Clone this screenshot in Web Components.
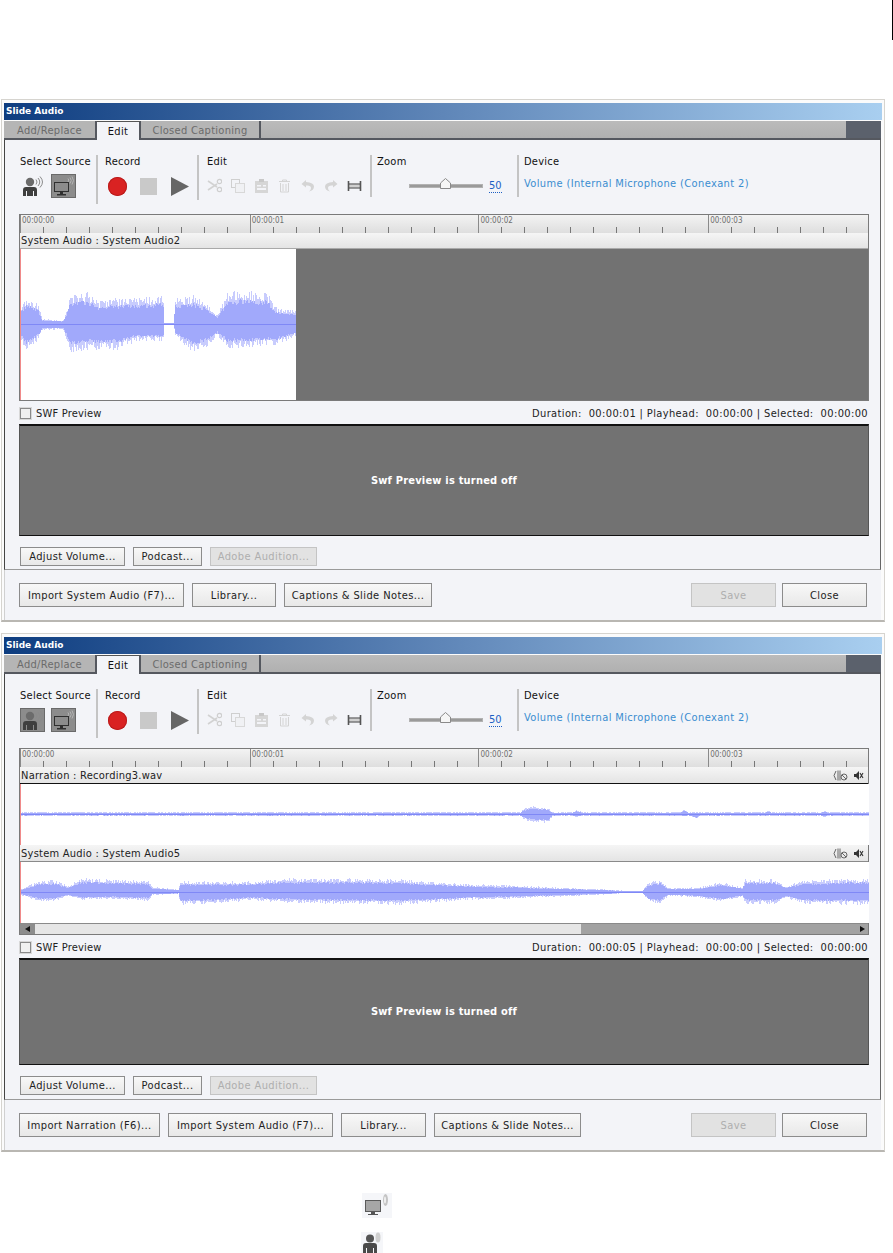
<!DOCTYPE html>
<html>
<head>
<meta charset="utf-8">
<title>Slide Audio</title>
<style>
  html, body { margin: 0; padding: 0; background: #fff; }
  body {
    width: 893px; height: 1253px; overflow: hidden; position: relative;
    font-family: "DejaVu Sans Condensed", "DejaVu Sans", sans-serif; font-size: 11px; color: #111;
  }
  .page { padding-top: 99px; }
</style>
</head>
<body>
<page-mark></page-mark>
<div class="page">

  <audio-dialog source="monitor" panel="430" preview="112">
    <time-ruler slot="tracks"></time-ruler>
    <audio-track slot="tracks" label="System Audio : System Audio2" line="#a9a9a9" h="16"></audio-track>
    <wave-form slot="tracks" height="151" width="276" seed="7" center="75"
      data="0,17,16 6,27,27 18,20,16 22,5,6 43,4,6 47,16,18 50,31,29 67,32,26 77,24,26 97,26,26 117,27,17 143,29,18 144,1,1 153,1,1 155,26,13 173,29,29 187,21,23 197,9,12 207,32,25 220,34,24 247,32,22 257,16,22 276,14,12"></wave-form>
    <span slot="status">Duration:  00:00:01 | Playhead:  00:00:00 | Selected:  00:00:00</span>
    <dlg-button slot="main" w="165">Import System Audio (F7)...</dlg-button>
    <dlg-button slot="main" w="84">Library...</dlg-button>
    <dlg-button slot="main" w="148">Captions &amp; Slide Notes...</dlg-button>
  </audio-dialog>

  <audio-dialog source="person" panel="426" preview="107" style="margin-top:11px">
    <time-ruler slot="tracks"></time-ruler>
    <audio-track slot="tracks" label="Narration : Recording3.wav" line="#111" h="17" tools></audio-track>
    <wave-form slot="tracks" height="61" width="849" seed="3" center="30"
      data="0,2,2 500,2,2 503,5,5 510,8,8 522,7,9 528,6,9 532,2,2 552,2,2 556,4,3 562,2,2 660,2,2 664,5,3 668,2,2 676,2,5 680,2,2 745,2,2 748,4,2 751,2,2 800,2,2 804,3,3 808,2,2 849,2,2"></wave-form>
    <audio-track slot="tracks" label="System Audio : System Audio5" line="#8a8a8a" h="17" tools></audio-track>
    <wave-form slot="tracks" height="61" width="849" seed="11" center="30"
      data="0,3,3 20,12,10 35,12,9 48,6,4 60,14,8 90,13,7 128,12,9 132,5,3 158,3,2 160,11,13 190,11,12 235,11,8 238,12,9 270,14,11 330,14,12 380,13,13 420,10,10 450,8,8 490,7,7 530,5,5 580,3,3 610,1,1 622,1,1 628,10,10 640,12,12 648,4,4 680,5,6 700,10,10 722,5,5 725,13,12 755,13,12 765,6,6 785,12,12 849,14,13"></wave-form>
    <scroll-strip slot="tracks"></scroll-strip>
    <span slot="status">Duration:  00:00:05 | Playhead:  00:00:00 | Selected:  00:00:00</span>
    <dlg-button slot="main" w="141">Import Narration (F6)...</dlg-button>
    <dlg-button slot="main" w="165">Import System Audio (F7)...</dlg-button>
    <dlg-button slot="main" w="85">Library...</dlg-button>
    <dlg-button slot="main" w="147">Captions &amp; Slide Notes...</dlg-button>
  </audio-dialog>

  <page-icons></page-icons>
</div>

<script>
const ICONS = {
  person: `<svg width="21" height="21" viewBox="0 0 21 21">
      <circle cx="8" cy="6" r="4.200" fill="#6b6b6b"/>
      <path d="M1 20v-6q0-3 3-3h8q3 0 3 3v6h-3v-5h-1v5H5v-5H4v5z" fill="#3f3f3f"/>
      <path d="M14 3.500q2 2.500 0 5M16 2q3.500 4 0 8M18 .5q5 5.500 0 11" fill="none" stroke="#8a8a8a" stroke-width="1"/>
    </svg>`,
  monitor: `<svg width="21" height="21" viewBox="0 0 21 21">
      <rect x="1.500" y="6.500" width="14" height="9" fill="#8c8c8c" stroke="#2f2f2f"/>
      <path d="M7 16h3v2h3v1.500H4V18h3z" fill="#2f2f2f"/>
      <path d="M15 2.500q1.500 1.500 0 3.500M17 1.500q2.500 3 0 6M19 .5q3 4 0 8" fill="none" stroke="#b5b5b5" stroke-width="1"/>
    </svg>`,
  monitorSmall: `<svg width="30" height="25" viewBox="0 0 30 25">
      <rect x="3.500" y="7.500" width="15" height="11" fill="#a6a6a6" stroke="#5a5a5a"/>
      <path d="M9 19h4v2h3v1H6v-1h3z" fill="#555"/>
      <ellipse cx="23.500" cy="7" rx="2.500" ry="6" fill="#c4c4c4"/>
      <ellipse cx="23" cy="7" rx="1" ry="3.500" fill="#f0f0f0"/>
    </svg>`,
  personSmall: `<svg width="22" height="21" viewBox="0 0 22 21">
      <circle cx="9" cy="6.500" r="4" fill="#555"/>
      <path d="M2 21v-7q0-3 3-3h8q3 0 3 3v7h-3v-5h-1v5H6v-5H5v5z" fill="#4a4a4a"/>
      <ellipse cx="17" cy="5.500" rx="2.500" ry="5" fill="#cfcfcf"/>
    </svg>`
};

const EDIT_ICONS = [
  `<path d="M1 3l9 6M1 12l9-6" stroke="#d2d2d2" stroke-width="1.600" fill="none"/><circle cx="12.500" cy="3.500" r="2.200" fill="none" stroke="#cfcfcf" stroke-width="1.200"/><circle cx="12.500" cy="11.500" r="2.200" fill="none" stroke="#cfcfcf" stroke-width="1.200"/>`,
  `<rect x="1.500" y="1.500" width="8" height="8" fill="#f3f4f8" stroke="#cfcfcf"/><rect x="5.500" y="5.500" width="9" height="9" fill="#f0f1f4" stroke="#d8d8d8"/>`,
  `<rect x="1" y="3" width="13" height="12" fill="#d6d6d6"/><rect x="5" y="1" width="5" height="3" fill="#c8c8c8"/><rect x="3" y="7" width="4" height="1.500" fill="#f3f4f8"/><rect x="9" y="7" width="3" height="1.500" fill="#f3f4f8"/><rect x="3" y="10" width="9" height="2" fill="#f3f4f8"/>`,
  `<path d="M2 3.500h11M5.500 3.500V2h4v1.500M3.500 5v9h8V5M6 6v7M9 6v7" fill="none" stroke="#d4d4d4" stroke-width="1"/>`,
  `<path d="M6 2L1.500 6 6 9.500V7.500q5-.5 5 2.500 0 2-2 3.500 5-1 5-5 0-4-8-4.500z" fill="#d4d4d4"/>`,
  `<path d="M9 2l4.500 4L9 9.500V7.500q-5-.5-5 2.500 0 2 2 3.500-5-1-5-5 0-4 8-4.500z" fill="#d4d4d4"/>`,
  `<path d="M2 6.500h11v3H2z" fill="#d0d0d0"/><path d="M1.500 3v10M13.500 3v10" stroke="#555" stroke-width="1.600"/><path d="M2 6h11M2 10h11" stroke="#3c3c3c" stroke-width="1"/>`
];

class PageMark extends HTMLElement {
  constructor() {
    super();
    this.attachShadow({ mode: 'open' });
    this.shadowRoot.innerHTML = `<style>
      :host { position: absolute; left: 892px; top: 0; width: 1px; height: 40px; background: #000; }
    </style>`;
  }
}

class DlgButton extends HTMLElement {
  static get observedAttributes() { return ['w']; }
  constructor() {
    super();
    this.attachShadow({ mode: 'open' });
    this.shadowRoot.innerHTML = `<style>
      :host {
        display: flex; align-items: center; justify-content: center; box-sizing: border-box;
        height: var(--btn-h, 24px); white-space: nowrap; font-size: 11px; letter-spacing: .4px; color: #222;
        background: linear-gradient(#f8f8f8, #e8e8e8); border: 1px solid #8c8c8c;
      }
      :host([disabled]) { background: #e2e2e2; border-color: #c4c4c4; color: #aeaeae; }
    </style><slot></slot>`;
  }
  attributeChangedCallback(name, old, val) {
    this.style.width = val + 'px';
  }
}

class ToolSection extends HTMLElement {
  constructor() {
    super();
    this.attachShadow({ mode: 'open' });
    this.shadowRoot.innerHTML = `<style>
      :host { display: block; box-sizing: border-box; }
      :host([rule]) { border-left: 2px solid #c4c4c4; }
      .label { height: 19px; line-height: 14px; color: #111; white-space: nowrap; letter-spacing: .25px; }
    </style><div class="label"></div><slot></slot>`;
  }
  connectedCallback() {
    this.shadowRoot.querySelector('.label').textContent = this.getAttribute('label');
  }
}

class SourcePicker extends HTMLElement {
  constructor() {
    super();
    this.attachShadow({ mode: 'open' });
    this.shadowRoot.innerHTML = `<style>
      :host { display: flex; gap: 6px; }
      .b { width: 25px; height: 24px; box-sizing: border-box; display: flex; align-items: center; justify-content: center; }
      .on { background: #8c8c8c; border: 1px solid #6a6a6a; }
    </style>
    <div class="b" id="person">${ICONS.person}</div>
    <div class="b on" id="monitor">${ICONS.monitor}</div>`;
  }
  connectedCallback() {
    // narration mode draws both boxed
    if (this.getAttribute('source') === 'person') {
      this.shadowRoot.getElementById('person').classList.add('on');
    }
  }
}

class RecordControls extends HTMLElement {
  constructor() {
    super();
    this.attachShadow({ mode: 'open' });
    this.shadowRoot.innerHTML = `<style>
      :host { display: flex; align-items: center; gap: 13px; height: 24px; padding-left: 3px; }
      .rec { width: 19px; height: 19px; border-radius: 50%; background: #d92222; box-shadow: inset 0 0 0 1px #b91c1c; }
      .stop { width: 17px; height: 17px; background: #c9c9c9; }
      svg { display: block; margin-left: 1px; }
    </style>
    <div class="rec"></div><div class="stop"></div>
    <svg width="18" height="19" viewBox="0 0 18 19"><path d="M0 0L18 9.500 0 19z" fill="#666"/></svg>`;
  }
}

class EditTools extends HTMLElement {
  constructor() {
    super();
    this.attachShadow({ mode: 'open' });
    this.shadowRoot.innerHTML = `<style>
      :host { display: flex; align-items: center; justify-content: space-between; width: 155px; height: 24px; }
      svg { display: block; }
    </style>` + EDIT_ICONS.map(p => `<svg width="15" height="16" viewBox="0 0 15 16">${p}</svg>`).join('');
  }
}

class ZoomSlider extends HTMLElement {
  constructor() {
    super();
    this.attachShadow({ mode: 'open' });
    this.shadowRoot.innerHTML = `<style>
      :host { display: flex; align-items: center; height: 24px; padding-left: 32px; gap: 6px; }
      .track { position: relative; width: 72px; background: #9a9a9a; border: 1px solid #b2b2b2; box-sizing: content-box; height: 2px; }
      svg { position: absolute; left: 30px; top: -7px; }
      a { color: #1d5fc4; border-bottom: 1px dotted #1d5fc4; font-size: 11px; line-height: 12px; margin-top: 1px; }
    </style>
    <div class="track"><svg width="11" height="11" viewBox="0 0 11 11"><path d="M.5 10.500V5L5.500.5l5 4.500v5.500z" fill="#f6f6f6" stroke="#8a8a8a"/></svg></div>
    <a>50</a>`;
  }
}

class TimeRuler extends HTMLElement {
  constructor() {
    super();
    this.attachShadow({ mode: 'open' });
    const segs = [['00:00:00', 230], ['00:00:01', 229], ['00:00:02', 230], ['00:00:03', 160]];
    this.shadowRoot.innerHTML = `<style>
      :host { display: flex; height: 18px; background: linear-gradient(#f3f3f3, #dedede); }
      .seg {
        box-sizing: border-box; border-left: 1px solid #8a8a8a; padding: 1px 0 0 1px;
        font-size: 8px; line-height: 10px; color: #6e6e6e;
        background: repeating-linear-gradient(90deg, transparent 0 22px, #777 22px 23px) 0 100% / 100% 6px no-repeat;
      }
      .seg:first-child { border-left-color: #d33; }
    </style>` + segs.map(s => `<div class="seg" style="width:${s[1]}px">${s[0]}</div>`).join('');
  }
}

class AudioTrack extends HTMLElement {
  constructor() {
    super();
    this.attachShadow({ mode: 'open' });
    this.shadowRoot.innerHTML = `<style>
      :host {
        display: flex; align-items: center; justify-content: space-between; box-sizing: border-box;
        padding: 0 4px 0 1px; background: linear-gradient(#f5f5f5, #e4e4e4); border-bottom: 1px solid #a9a9a9;
        white-space: nowrap; color: #222; letter-spacing: .25px;
      }
      .tools { display: flex; gap: 6px; align-items: center; }
      svg { display: block; }
    </style><span id="t"></span><div class="tools" id="tools"></div>`;
  }
  connectedCallback() {
    this.shadowRoot.getElementById('t').textContent = this.getAttribute('label');
    this.style.borderBottomColor = this.getAttribute('line');
    this.style.height = this.getAttribute('h') + 'px';
    if (this.hasAttribute('tools')) {
      this.shadowRoot.getElementById('tools').innerHTML = `
        <svg width="15" height="11" viewBox="0 0 15 11"><path d="M3 1L1 5.500 3 10M5 .5v10M7 .5v10" fill="none" stroke="#666"/><circle cx="11" cy="7" r="3" fill="none" stroke="#666"/><path d="M9 5l4 4" stroke="#666"/></svg>
        <svg width="10" height="11" viewBox="0 0 10 11"><path d="M0 4h2l3-3v9L2 7H0z" fill="#333"/><path d="M6 3l3 5M9 3L6 8" stroke="#333" stroke-width="1.100"/></svg>`;
    }
  }
}

class WaveForm extends HTMLElement {
  connectedCallback() {
    if (this.shadowRoot) return;
    this.attachShadow({ mode: 'open' });
    const w = +this.getAttribute('width'), h = +this.getAttribute('height');
    const cy = +this.getAttribute('center');
    let seed = +this.getAttribute('seed');
    const rnd = () => (seed = (seed * 16807) % 2147483647) / 2147483647;
    const pts = this.getAttribute('data').trim().split(/\s+/).map(p => p.split(',').map(Number));
    let light = '', dark = '';
    let k = 0;
    for (let x = 0; x < w; x++) {
      while (k < pts.length - 2 && pts[k + 1][0] <= x) k++;
      const a = pts[k], b = pts[k + 1];
      const f = Math.min(1, Math.max(0, (x - a[0]) / (b[0] - a[0])));
      const top = a[1] + (b[1] - a[1]) * f, bot = a[2] + (b[2] - a[2]) * f;
      // spiky light peaks over a denser, lower body
      const spike = () => rnd() < 0.4 ? 0.68 + 0.12 * rnd() : 0.8 + 0.2 * rnd();
      const t1 = top * spike(), b1 = bot * spike();
      const t2 = top * (0.58 + 0.16 * rnd()), b2 = bot * (0.58 + 0.16 * rnd());
      light += `M${x + .5} ${(cy - t1).toFixed(1)}V${(cy + b1).toFixed(1)}`;
      dark += `M${x + .5} ${(cy - t2).toFixed(1)}V${(cy + b2).toFixed(1)}`;
    }
    this.shadowRoot.innerHTML = `<style>
      :host { display: block; position: relative; height: ${h}px; background: #727272; }
      .white { width: ${w}px; height: ${h}px; background: #fff; }
      svg { position: absolute; left: 0; top: 0; }
    </style>
    <div class="white"></div>
    <svg width="${w}" height="${h}" shape-rendering="crispEdges">
      <path d="${light}" stroke="#c8ccfd" fill="none"/>
      <path d="${dark}" stroke="#a1a9fb" fill="none"/>
      <path d="M0 ${cy + .5}H${w}" stroke="#7f88f6"/>
      <path d="M.5 0V${h}" stroke="#f08a8a"/>
    </svg>`;
  }
}

class ScrollStrip extends HTMLElement {
  constructor() {
    super();
    this.attachShadow({ mode: 'open' });
    this.shadowRoot.innerHTML = `<style>
      :host { display: flex; height: 11px; box-sizing: border-box; border-top: 1px solid #8a8a8a; background: #a2a2a2; }
      .arrow { width: 15px; background: #8d8d8d; display: flex; align-items: center; justify-content: center; }
      .thumb { width: 546px; background: #e6e6e6; }
      .rest { flex: 1; }
      .tri { width: 0; height: 0; border-top: 3.5px solid transparent; border-bottom: 3.5px solid transparent; }
    </style>
    <div class="arrow"><div class="tri" style="border-right:5px solid #111"></div></div>
    <div class="thumb"></div><div class="rest"></div>
    <div class="arrow" style="background:none;width:12px"><div class="tri" style="border-left:5px solid #111"></div></div>`;
  }
}

class AudioDialog extends HTMLElement {
  constructor() {
    super();
    this.attachShadow({ mode: 'open' });
  }
  connectedCallback() {
    const panel = this.getAttribute('panel'), preview = this.getAttribute('preview');
    this.shadowRoot.innerHTML = `<style>
      :host {
        display: block; box-sizing: border-box; width: 884px; margin-left: 1px;
        border: 1px solid #d6d4cf; border-bottom: 2px solid #b9b7b2; padding: 3px 2px 0; background: #fbfbfb;
      }
      .title {
        height: 17px; line-height: 17px; padding-left: 2px; color: #fff; font: bold 9px/17px "DejaVu Sans", sans-serif;
        background: linear-gradient(90deg, #0e3d80, #5f86b8 50%, #a9cff0);
      }
      .tabs {
        display: flex; height: 19px; margin-top: 1px; margin-right: 1px; box-sizing: border-box;
        background: #5b616c; border-bottom: 2px solid #55585f; color: #6b6b6b; letter-spacing: .3px;
      }
      .tab { display: flex; align-items: center; justify-content: center; height: 17px; padding-top: 2px; background: #b5b5b5; border-right: 2px solid #55585f; box-sizing: border-box; }
      .tab.on { height: 19px; background: #f3f4f8; color: #111; border-top: 1px solid #555; padding-top: 1px; }
      .rest { width: 585px; height: 17px; background: linear-gradient(#bbb, #b0b0b0); }
      .panel {
        box-sizing: border-box; height: ${panel}px; margin-right: 1px; background: #f3f4f8;
        border-left: 1px solid #444; border-right: 1px solid #666; border-bottom: 1px solid #9a9a9a;
        display: flex; flex-direction: column;
      }
      .toolbar { display: flex; height: 74px; box-sizing: border-box; padding: 15px 0 0 15px; }
      .s1 { width: 76px; }
      .s2 { width: 101px; height: 49px; padding-left: 7px; }
      .s3 { width: 173px; height: 45px; padding-left: 8px; }
      .s4 { width: 147px; height: 42px; padding-left: 5px; }
      .s5 { height: 42px; padding-left: 5px; }
      .device { color: #3a8dd0; line-height: 15px; margin-top: 2px; white-space: nowrap; letter-spacing: .37px; }
      .tracks { margin: 0 11px 0 14px; box-sizing: border-box; height: 187px; border: 1px solid #7a7a7a; background: #727272; display: flex; flex-direction: column; }
      .swf { height: 23px; box-sizing: border-box; padding-top: 2px; margin: 0 12px 0 15px; display: flex; align-items: center; justify-content: space-between; color: #222; white-space: pre; letter-spacing: .37px; }
      .check { display: flex; align-items: center; gap: 5px; letter-spacing: .2px; }
      .box { width: 11px; height: 11px; box-sizing: border-box; background: #f0f0f0; border: 1px solid #8a8a8a; box-shadow: 0 0 0 1px #d8d8d8; }
      .preview {
        height: ${preview}px; margin: 0 11px 0 14px; box-sizing: border-box; background: #727272; border: 1px solid #555;
        border-top: 2px solid #111; border-bottom-color: #111; display: flex; align-items: center; justify-content: center;
        color: #fff; font-weight: bold; font-size: 11px; letter-spacing: .2px; padding-bottom: 1px;
      }
      .row { --btn-h: 19px; display: flex; gap: 8px; padding: 11px 0 0 15px; }
      .foot { --btn-h: 24px; display: flex; justify-content: space-between; height: 50px; box-sizing: border-box; padding: 13px 14px 13px 14px; margin-right: 1px; background: #f3f4f8; border-left: 1px solid #d0d0d0; }
      .group { display: flex; gap: 8px; }
      .group.end { gap: 6px; }
    </style>
    <div class="title">Slide Audio</div>
    <div class="tabs">
      <div class="tab" style="width:93px">Add/Replace</div>
      <div class="tab on" style="width:44px">Edit</div>
      <div class="tab" style="width:120px">Closed Captioning</div>
      <div class="rest"></div>
    </div>
    <div class="panel">
      <div class="toolbar">
        <tool-section class="s1" label="Select Source"><source-picker source="${this.getAttribute('source')}"></source-picker></tool-section>
        <tool-section class="s2" rule label="Record"><record-controls></record-controls></tool-section>
        <tool-section class="s3" rule label="Edit"><edit-tools></edit-tools></tool-section>
        <tool-section class="s4" rule label="Zoom"><zoom-slider></zoom-slider></tool-section>
        <tool-section class="s5" rule label="Device"><div class="device">Volume (Internal Microphone (Conexant 2)</div></tool-section>
      </div>
      <div class="tracks"><slot name="tracks"></slot></div>
      <div class="swf"><div class="check"><div class="box"></div>SWF Preview</div><slot name="status"></slot></div>
      <div class="preview">Swf Preview is turned off</div>
      <div class="row">
        <dlg-button w="105">Adjust Volume...</dlg-button>
        <dlg-button w="69">Podcast...</dlg-button>
        <dlg-button w="107" disabled>Adobe Audition...</dlg-button>
      </div>
    </div>
    <div class="foot">
      <div class="group"><slot name="main"></slot></div>
      <div class="group end">
        <dlg-button w="85" disabled>Save</dlg-button>
        <dlg-button w="85">Close</dlg-button>
      </div>
    </div>`;
  }
}

class PageIcons extends HTMLElement {
  constructor() {
    super();
    this.attachShadow({ mode: 'open' });
    this.shadowRoot.innerHTML = `<style>
      :host { display: flex; flex-direction: column; gap: 14px; align-items: flex-start; padding: 41px 0 0 361px; }
      .i { background: #f5f6f9; filter: blur(.7px); display: flex; }
      .m { width: 30px; height: 25px; margin-left: 1px; }
      .p { width: 22px; height: 21px; }
    </style>
    <div class="i m">${ICONS.monitorSmall}</div><div class="i p">${ICONS.personSmall}</div>`;
  }
}

customElements.define('page-mark', PageMark);
customElements.define('dlg-button', DlgButton);
customElements.define('tool-section', ToolSection);
customElements.define('source-picker', SourcePicker);
customElements.define('record-controls', RecordControls);
customElements.define('edit-tools', EditTools);
customElements.define('zoom-slider', ZoomSlider);
customElements.define('time-ruler', TimeRuler);
customElements.define('audio-track', AudioTrack);
customElements.define('wave-form', WaveForm);
customElements.define('scroll-strip', ScrollStrip);
customElements.define('audio-dialog', AudioDialog);
customElements.define('page-icons', PageIcons);
</script>
</body>
</html>
